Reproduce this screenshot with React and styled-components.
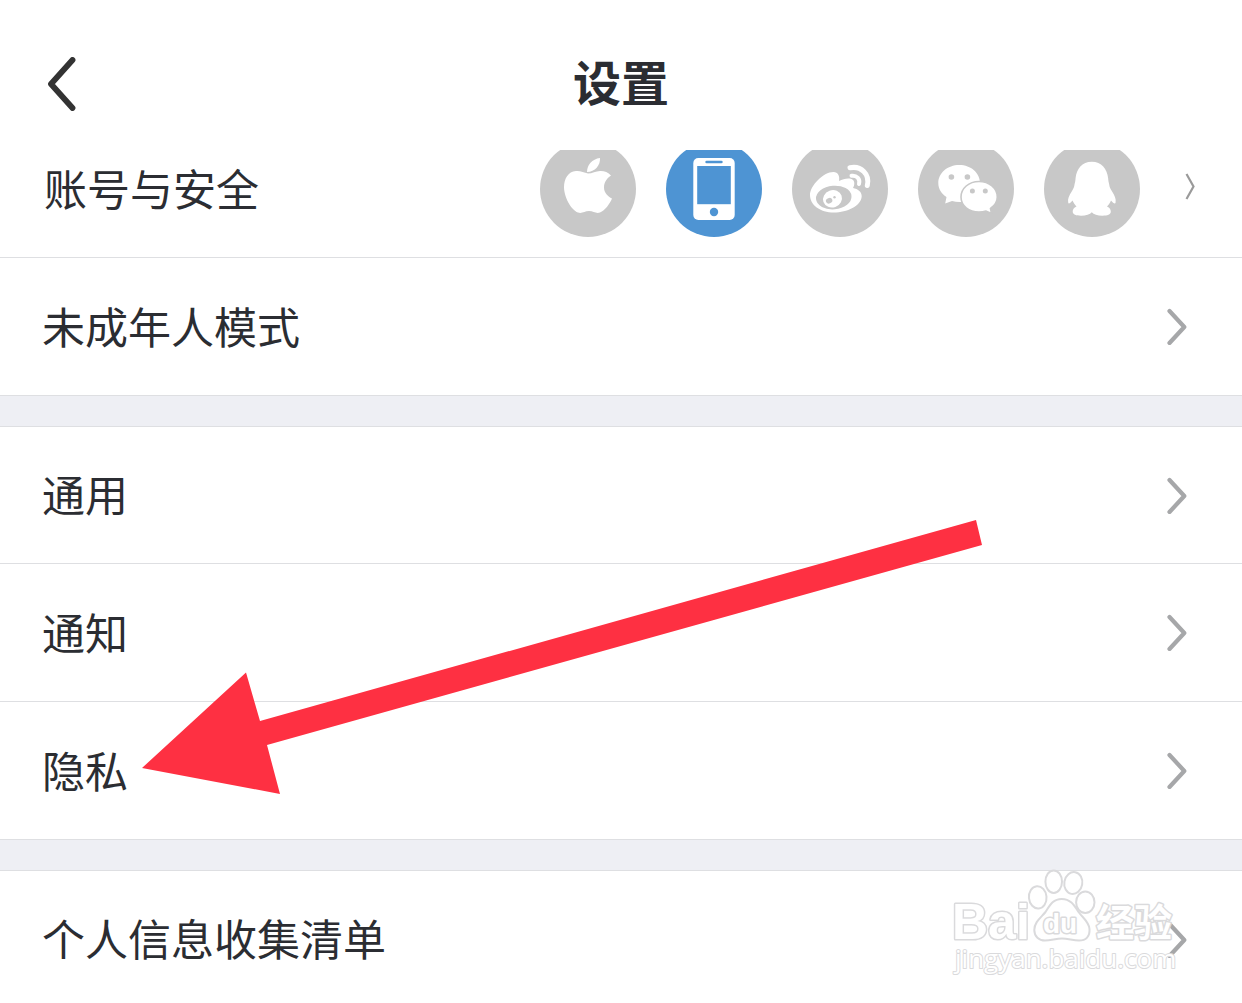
import React from 'react';
import styled, { createGlobalStyle } from 'styled-components';

const accounts = [
  { id: 'apple', label: 'Apple', icon: <AppleIcon /> },
  { id: 'phone', label: '手机', icon: <PhoneIcon />, active: true },
  { id: 'weibo', label: '微博', icon: <WeiboIcon /> },
  { id: 'wechat', label: '微信', icon: <WechatIcon /> },
  { id: 'qq', label: 'QQ', icon: <QQIcon /> },
];

const groups = [
  ['通用', '通知', '隐私'],
  ['个人信息收集清单'],
];

const App = () => {
  return (
    <Page>
      <GlobalStyle />
      <Header>
        <BackButton type="button" aria-label="返回">
          <svg width="30" height="54" viewBox="0 0 30 54" fill="none">
            <path d="M25.5 3L4 27l21.5 24" stroke="#333" strokeWidth="5.8" strokeLinecap="round" strokeLinejoin="round" />
          </svg>
        </BackButton>
        <Title>设置</Title>
      </Header>

      <Content>
        <Group>
          <li>
            <AccountRow href="#account">
              <Label>账号与安全</Label>
              <Accounts>
                {accounts.map((account) => (
                  <Badge key={account.id} $active={account.active} role="img" aria-label={account.label}>
                    {account.icon}
                  </Badge>
                ))}
              </Accounts>
              <ThinChevron />
            </AccountRow>
          </li>
          <li>
            <Row href="#minor">
              <Label>未成年人模式</Label>
              <Chevron />
            </Row>
          </li>
        </Group>

        {groups.map((items) => (
          <Group key={items[0]} $divided>
            {items.map((item) => (
              <li key={item}>
                <Row href={`#${item}`}>
                  <Label>{item}</Label>
                  <Chevron />
                </Row>
              </li>
            ))}
          </Group>
        ))}
      </Content>

      <Pointer width="842" height="276" viewBox="0 0 842 276" aria-hidden="true">
        <path d="M0 248L104 152.500L118 201L834 0L840 25L125 225L138 274Z" fill="#fe3042" />
      </Pointer>

      <Watermark />
    </Page>
  );
};

export default App;

function AppleIcon() {
  return (
    <svg viewBox="0 0 96 96" fill="#fff">
      <path d="M48 32.500C44 31.500 40 29.500 36 30C28 30.500 24 38 24 46C24 56 31 69 38 71.500C42 73 44.500 70 49 70C53.500 70 56 73 60 71.500C65 69.500 70 62.500 72 57.500C68 55.500 64 52 64 46.500C64 40.500 67.500 37 71 34.500C68 31 64 29.800 60 30C56 30.200 52 32.500 48 32.500Z" />
      <path d="M47 31C47 24 52 18 60 17C60.500 24 55 31 47 31Z" />
    </svg>
  );
}

function PhoneIcon() {
  return (
    <svg viewBox="0 0 96 96" fill="#fff">
      <rect x="27.300" y="17" width="41.400" height="62" rx="5" />
      <rect x="39.300" y="19.700" width="17.400" height="2.600" rx="1.300" fill="#4e94d3" />
      <rect x="31.200" y="25" width="33.600" height="38.200" fill="#4e94d3" />
      <circle cx="48" cy="71" r="4.200" fill="#4e94d3" />
    </svg>
  );
}

function WeiboIcon() {
  return (
    <svg viewBox="0 0 96 96" fill="#fff">
      <path d="M18 54C18 45 31 31 41.500 31C46 31 48 35 47 40C52 37.500 58 36.500 61 39C63 41 62.500 44.500 61 47C66 48 70 51 69.700 55.500C69 65 55 71.500 42 71.500C28 71.500 18 64 18 54Z" />
      <ellipse cx="41.700" cy="56.500" rx="17.800" ry="11.800" fill="#c8c8c8" transform="rotate(-5 42 56)" />
      <ellipse cx="40.500" cy="58" rx="9.600" ry="8.600" transform="rotate(-20 40 58)" />
      <ellipse cx="37.200" cy="59.800" rx="3.300" ry="2.700" fill="#c8c8c8" transform="rotate(-20 37 60)" />
      <circle cx="42.500" cy="56.300" r="1.200" fill="#c8c8c8" />
      <path d="M58 26.800C69 24.500 78 33 75.300 44.500" fill="none" stroke="#fff" strokeWidth="5" strokeLinecap="round" />
      <path d="M59.500 34.800C64.500 34 68.500 38 67 43" fill="none" stroke="#fff" strokeWidth="4" strokeLinecap="round" />
    </svg>
  );
}

function WechatIcon() {
  return (
    <svg viewBox="0 0 96 96" fill="#fff">
      <path d="M41.300 24C29.500 24 20.300 32 20.300 42C20.300 48 23.500 52.800 28.500 56L27.200 62.500L34 60C36.500 60.700 39 61 41.300 61C53 61 62 52.500 62 42C62 32 53 24 41.300 24Z" />
      <path d="M61 40.500C50.800 40.500 43 47.300 43 56C43 64.700 50.800 71 61 71C63.500 71 66 70.600 68 70L73.500 72.500L72.500 67.500C76.500 64.700 79.300 60.800 79.300 56C79.300 47.300 71.200 40.500 61 40.500Z" stroke="#c8c8c8" strokeWidth="1.600" />
      <g fill="#c8c8c8">
        <circle cx="33.400" cy="36" r="2.800" />
        <circle cx="49.400" cy="36" r="2.800" />
        <circle cx="54.400" cy="50" r="2.500" />
        <circle cx="67.300" cy="50" r="2.500" />
      </g>
    </svg>
  );
}

function QQIcon() {
  return (
    <svg viewBox="0 0 96 96" fill="#fff">
      <path d="M47.800 20.700C38 20.700 32.500 28 31.600 37C31.400 40 31 41.500 30.500 43.500C30.200 46 29.500 47.500 28 50C25 54.500 23.500 58 24.200 61.500C24.500 63.300 26 62.500 28.500 59.500C29.500 61.500 30.500 63.500 32.500 65.500C29.800 66.800 28.600 68.600 28.700 70.800C28.900 73.500 32 74.700 37 74.700C42 74.700 46 73.500 47.800 71.200C49.600 73.500 53.500 74.700 58.500 74.700C63.500 74.700 66.700 73.500 66.800 70.800C66.900 68.600 65.800 66.800 63 65.500C65 63.500 66.200 61.500 67 59.500C69.500 62.500 71.300 63.300 71.600 61.500C72.200 58 70.800 54.500 67.800 50C66.200 47.500 65.500 46 65.200 43.500C64.800 41.500 64.300 40 64.100 37C63.200 28 57.600 20.700 47.800 20.700Z" />
    </svg>
  );
}

const Chevron = () => (
  <svg width="20" height="37" viewBox="0 0 20 37" fill="none" aria-hidden="true">
    <path d="M2.500 3L17.300 19L2.500 35" stroke="#a6a7a9" strokeWidth="4.200" strokeLinecap="round" strokeLinejoin="round" />
  </svg>
);

const ThinChevron = () => (
  <svg width="12" height="32" viewBox="0 0 12 32" fill="none" aria-hidden="true">
    <path d="M2.500 1L9.500 13.500L2.500 26" stroke="#9a9a9a" strokeWidth="2.200" />
  </svg>
);

const Watermark = () => (
  <Mark width="230" height="112" viewBox="0 0 230 112">
    <g fill="#fff" stroke="#dadadc" strokeWidth="2">
      <ellipse cx="103.700" cy="15.700" rx="8.300" ry="11.300" />
      <ellipse cx="123.300" cy="17" rx="9" ry="11" transform="rotate(10 123 17)" />
      <ellipse cx="87.700" cy="31.300" rx="8.800" ry="11.200" transform="rotate(-5 88 31)" />
      <ellipse cx="135.300" cy="36.300" rx="9.200" ry="10.800" />
      <path d="M111.700 33C103 33 100 39 95.500 46C91 51.500 84.300 56 84.300 64C84.300 70.500 89 74.500 95 74.500C101 74.500 106 72.500 112 72.500C118 72.500 123 74.500 129 74.500C136 74.500 140 70.500 139.500 63C139 56 133 52 128.500 46C124 39 120.500 33 111.700 33Z" />
    </g>
    <MarkText x="2" y="73" $size={50}>Bai</MarkText>
    <MarkText x="93" y="67" $size={28}>du</MarkText>
    <MarkText x="146" y="70" $size={38}>经验</MarkText>
    <MarkText x="5" y="102" $size={26} $url>jingyan.baidu.com</MarkText>
  </Mark>
);

const GlobalStyle = createGlobalStyle`
  * {
    box-sizing: border-box;
  }

  body {
    margin: 0;
    background: #fff;
    color: #2b2d32;
    font-family: 'Noto Sans CJK SC', 'Noto Sans', sans-serif;
  }
`;

const Page = styled.div`
  position: relative;
  height: 100vh;
  overflow: hidden;
  background: #fff;
`;

const Header = styled.header`
  position: relative;
  z-index: 1;
  display: grid;
  grid-template-columns: 1fr auto 1fr;
  align-items: center;
  height: 150px;
  padding: 18px 47px 0;
  background: #fff;
`;

const BackButton = styled.button`
  display: flex;
  justify-self: start;
  padding: 0;
  border: none;
  background: none;
  cursor: pointer;
`;

const Title = styled.h1`
  margin: 0;
  padding-bottom: 8px;
  font-size: 48px;
  font-weight: 700;
  line-height: 64px;
`;

/* the list is scrolled a little under the header */
const Content = styled.main`
  margin-top: -30px;
  background: #eeeff4;
`;

const Group = styled.ul`
  margin: 0 0 30px;
  padding: 0;
  list-style: none;

  li:first-child > a {
    border-top: ${({ $divided }) => ($divided ? '1px solid #dedfe2' : 'none')};
  }
`;

const Row = styled.a`
  display: flex;
  align-items: center;
  height: 138px;
  padding: 0 55px 0 42px;
  border-bottom: 1px solid #dedfe2;
  background: #fff;
  color: inherit;
  text-decoration: none;
`;

const AccountRow = styled(Row)`
  padding: 1px 46px 0 44px;
`;

const Label = styled.span`
  flex: 1;
  padding-bottom: 4px;
  font-size: 43px;
  line-height: 60px;
`;

const Accounts = styled.span`
  display: flex;
  gap: 30px;
  margin-right: 44px;
`;

const Badge = styled.span`
  width: 96px;
  height: 96px;
  border-radius: 50%;
  background: ${({ $active }) => ($active ? '#4e94d3' : '#c8c8c8')};

  svg {
    display: block;
  }
`;

const Pointer = styled.svg`
  position: absolute;
  top: 520px;
  left: 142px;
  pointer-events: none;
`;

const Mark = styled.svg`
  position: absolute;
  right: 62px;
  bottom: 25px;
  pointer-events: none;
`;

const MarkText = styled.text`
  fill: #fff;
  stroke: #dadadc;
  stroke-width: ${({ $url }) => ($url ? 2 : 3)}px;
  stroke-linejoin: round;
  paint-order: stroke;
  font-family: ${({ $url }) => ($url ? "'Open Sans'" : "'Liberation Sans'")}, 'Noto Sans CJK SC', sans-serif;
  font-size: ${({ $size }) => $size}px;
  font-weight: ${({ $url }) => ($url ? 400 : 700)};
`;
